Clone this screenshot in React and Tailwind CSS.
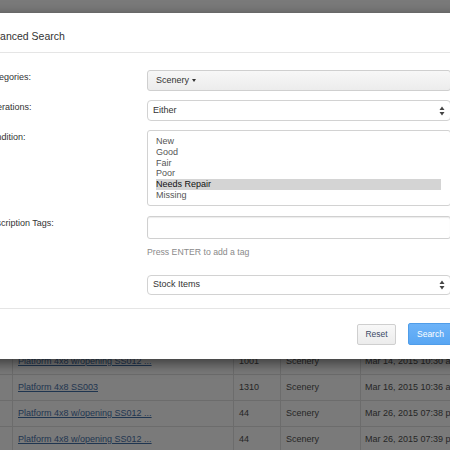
import React from "react";

const rows = [
  { name: "Platform 4x8 w/opening SS012 ...", qty: "1001", cat: "Scenery", date: "Mar 14, 2015 10:30 am" },
  { name: "Platform 4x8 SS003", qty: "1310", cat: "Scenery", date: "Mar 16, 2015 10:36 am" },
  { name: "Platform 4x8 w/opening SS012 ...", qty: "44", cat: "Scenery", date: "Mar 26, 2015 07:38 pm" },
  { name: "Platform 4x8 w/opening SS012 ...", qty: "44", cat: "Scenery", date: "Mar 26, 2015 07:39 pm" },
];

const conditions = ["New", "Good", "Fair", "Poor", "Needs Repair", "Missing"];

const Arrows = () => (
  <svg width="6" height="10" viewBox="0 0 6 10" className="absolute right-[5px] top-1/2 -translate-y-1/2">
    <path d="M3 0.5 L5.5 4 L0.5 4 Z" fill="#444" />
    <path d="M3 9.5 L5.5 6 L0.5 6 Z" fill="#444" />
  </svg>
);

const Label = ({ children }) => (
  <div className="w-[162px] shrink-0 text-[9px] leading-[12px] pt-[1px] text-[#333]">{children}</div>
);

const App = () => {
  return (
    <div
      className="relative w-[450px] h-[450px] overflow-hidden bg-[#7a7a7a]"
      style={{ fontFamily: '"Liberation Sans", Arial, sans-serif' }}
    >
      {/* page behind the overlay */}
      <div className="pt-[349px]">
        {rows.map((r, i) => (
          <div key={i} className="flex h-[26px] border-b border-[#6c6c6c] text-[9px] text-[#262626]">
            <div className="w-[13px] shrink-0 border-r border-[#6c6c6c]" />
            <div className="w-[221px] shrink-0 border-r border-[#6c6c6c] pl-[5px] flex items-center">
              <span className="underline text-[#1f3550] truncate">{r.name}</span>
            </div>
            <div className="w-[47px] shrink-0 border-r border-[#6c6c6c] pl-[5px] flex items-center">{r.qty}</div>
            <div className="w-[80px] shrink-0 border-r border-[#6c6c6c] pl-[5px] flex items-center">{r.cat}</div>
            <div className="pl-[4px] flex items-center whitespace-nowrap">{r.date}</div>
          </div>
        ))}
      </div>

      {/* modal */}
      <div className="absolute left-[-36px] top-[13px] w-[520px] bg-white rounded-[4px] shadow-[0_4px_14px_rgba(0,0,0,0.55)]">
        <div className="h-[40px] border-b border-[#e5e5e5] pl-[18px] pt-[17px] text-[10.5px] leading-[12px] text-[#333]">
          Advanced Search
        </div>

        <div className="pt-[17px] pb-[13px] pl-[21px]">
          <div className="flex">
            <Label>Categories:</Label>
            <div className="w-[304px] h-[21px] border border-[#cfcfcf] rounded-[3px] bg-gradient-to-b from-[#f7f7f7] to-[#ececec] flex items-center pl-[8px] text-[9px] text-[#333]">
              Scenery
              <span className="ml-[3px] inline-block border-x-[2.5px] border-x-transparent border-t-[3px] border-t-[#333]" />
            </div>
          </div>

          <div className="flex mt-[9px]">
            <Label>Operations:</Label>
            <div className="relative w-[304px] h-[21px] border border-[#d2d2d2] rounded-[4px] flex items-center pl-[5px] text-[9px] text-[#333]">
              Either
              <Arrows />
            </div>
          </div>

          <div className="flex mt-[9px]">
            <Label>Condition:</Label>
            <div className="w-[304px] h-[76px] border border-[#d2d2d2] rounded-[3px] pt-[5px] pl-[8px] pr-[9px] text-[9px] leading-[10.8px] text-[#555]">
              {conditions.map((c) => (
                <div key={c} className={c === "Needs Repair" ? "bg-[#d4d4d4] text-[#111]" : ""}>
                  {c}
                </div>
              ))}
            </div>
          </div>

          <div className="flex mt-[10px]">
            <Label>Description Tags:</Label>
            <div>
              <div className="w-[304px] h-[23px] border border-[#d0d0d0] rounded-[3px] shadow-[inset_0_1px_1px_rgba(0,0,0,0.08)]" />
              <div className="mt-[8px] text-[8.7px] leading-[11px] text-[#8a8a8a]">Press ENTER to add a tag</div>
            </div>
          </div>

          <div className="flex mt-[17px]">
            <Label />
            <div className="relative w-[304px] h-[20px] border border-[#d2d2d2] rounded-[4px] flex items-center pl-[5px] text-[9px] text-[#333]">
              Stock Items
              <Arrows />
            </div>
          </div>
        </div>

        <div className="h-[51px] border-t border-[#e5e5e5] flex items-center gap-[12px] pl-[393px]">
          <div className="w-[39px] h-[21px] border border-[#cfcfcf] rounded-[2px] bg-gradient-to-b from-[#f8f8f8] to-[#ececec] flex items-center justify-center text-[8.5px] text-[#3b4a66]">
            Reset
          </div>
          <div className="w-[60px] h-[22px] border border-[#4f9de9] rounded-[2px] bg-gradient-to-b from-[#6db3f8] to-[#58a6f3] flex items-center pl-[8px] text-[8.5px] text-white">
            Search
          </div>
        </div>
      </div>
    </div>
  );
};

export default App;
